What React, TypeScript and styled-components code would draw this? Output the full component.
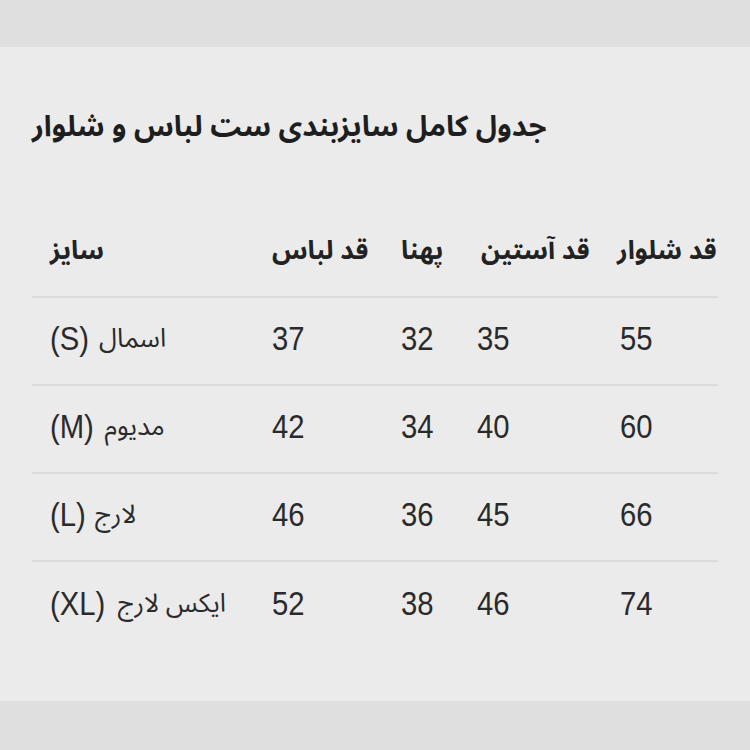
import React from "react";
import styled, { createGlobalStyle } from "styled-components";

const Global = createGlobalStyle`
  html, body { margin: 0; padding: 0; background: #dfdfdf; }
  body { font-family: "Liberation Sans", "DejaVu Sans", sans-serif; }
`;

const Page = styled.div`
  width: 750px;
  height: 750px;
  background: #dfdfdf;
  padding-top: 47px;
  box-sizing: border-box;
`;

const Card = styled.section`
  height: 654px;
  background: #ebebeb;
  padding: 58px 32px 0 32px;
  box-sizing: border-box;
`;

const Title = styled.h1`
  margin: 0;
  height: 44px;
  line-height: 44px;
  font-family: "Noto Sans Arabic", "DejaVu Sans", sans-serif;
  font-size: 29px;
  font-weight: 700;
  color: #1e1e1e;
  text-align: left;
  white-space: nowrap;
`;

const Table = styled.div`
  margin-top: 61px;
  display: grid;
  grid-template-columns: 222px 129px 76px 143px 116px;
`;

const Row = styled.div<{ $last?: boolean }>`
  display: contents;
  & > * {
    border-bottom: ${(p) => (p.$last ? "none" : "2px solid #dcdcdc")};
  }
`;

const HeadCell = styled.div<{ $shift?: number }>`
  height: 88px;
  box-sizing: border-box;
  padding: 0 0 6px ${(p) => 18 + (p.$shift ?? 0)}px;
  display: flex;
  align-items: center;
  justify-content: flex-start;
  font-family: "Noto Sans Arabic", "DejaVu Sans", sans-serif;
  font-size: 26px;
  font-weight: 700;
  color: #222;
  white-space: nowrap;
`;

const Cell = styled.div`
  height: 88px;
  box-sizing: border-box;
  padding: 0 0 5px 18px;
  display: flex;
  align-items: center;
  justify-content: flex-start;
  gap: 11px;
  white-space: nowrap;
  color: #2a2a2a;
`;

const Num = styled.span<{ $tight?: boolean }>`
  display: inline-block;
  font-family: "Liberation Sans", "DejaVu Sans", sans-serif;
  font-size: 34px;
  transform: scaleX(0.86);
  transform-origin: left center;
  margin-right: ${(p) => (p.$tight ? "-0.22em" : "0")};
`;

const Fa = styled.span`
  font-family: "Noto Sans Arabic", "DejaVu Sans", sans-serif;
  font-size: 26px;
`;

const headers: { t: string; shift: number }[] = [
  { t: "سایز", shift: 0 },
  { t: "قد لباس", shift: 0 },
  { t: "پهنا", shift: 0 },
  { t: "قد آستین", shift: 4 },
  { t: "قد شلوار", shift: -3 },
];

const rows: { fa: string; en: string; v: number[] }[] = [
  { fa: "اسمال", en: "S", v: [37, 32, 35, 55] },
  { fa: "مدیوم", en: "M", v: [42, 34, 40, 60] },
  { fa: "لارج", en: "L", v: [46, 36, 45, 66] },
  { fa: "ایکس لارج", en: "XL", v: [52, 38, 46, 74] },
];

export default function App() {
  return (
    <Page>
      <Global />
      <Card>
        <Title>جدول کامل سایزبندی ست لباس و شلوار</Title>
        <Table>
          <Row>
            {headers.map((h) => (
              <HeadCell key={h.t} $shift={h.shift}>
                {h.t}
              </HeadCell>
            ))}
          </Row>
          {rows.map((r, i) => (
            <Row key={r.en} $last={i === rows.length - 1}>
              <Cell>
                <Num $tight>({r.en})</Num>
                <Fa>{r.fa}</Fa>
              </Cell>
              {r.v.map((n, j) => (
                <Cell key={j}>
                  <Num>{n}</Num>
                </Cell>
              ))}
            </Row>
          ))}
        </Table>
      </Card>
    </Page>
  );
}
